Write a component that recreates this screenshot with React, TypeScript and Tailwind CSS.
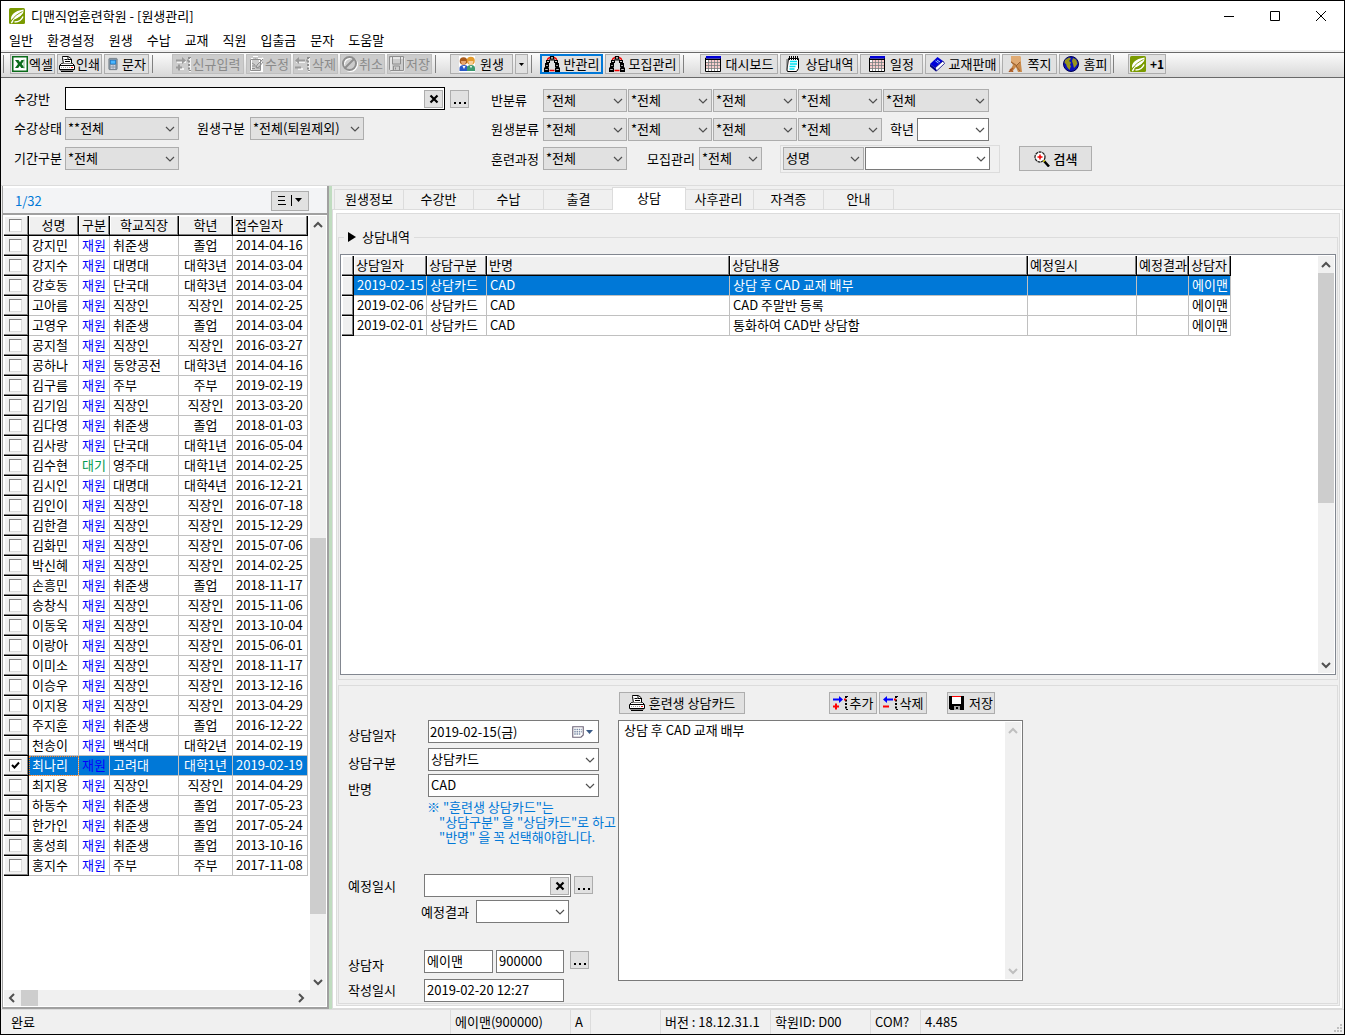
/**
 * 원생관리 — student management window
 *
 * Toolbar, search filters, student list and the consultation tab.
 */

import { useState } from 'react';
import type { ReactNode } from 'react';
import clsx from 'clsx';

type Student = [name: string, status: string, school: string, grade: string, date: string];

const STUDENTS: Student[] = [
  ['강지민', '재원', '취준생', '졸업', '2014-04-16'],
  ['강지수', '재원', '대명대', '대학3년', '2014-03-04'],
  ['강호동', '재원', '단국대', '대학3년', '2014-03-04'],
  ['고아름', '재원', '직장인', '직장인', '2014-02-25'],
  ['고영우', '재원', '취준생', '졸업', '2014-03-04'],
  ['공지철', '재원', '직장인', '직장인', '2016-03-27'],
  ['공하나', '재원', '동양공전', '대학3년', '2014-04-16'],
  ['김구름', '재원', '주부', '주부', '2019-02-19'],
  ['김기임', '재원', '직장인', '직장인', '2013-03-20'],
  ['김다영', '재원', '취준생', '졸업', '2018-01-03'],
  ['김사랑', '재원', '단국대', '대학1년', '2016-05-04'],
  ['김수현', '대기', '영주대', '대학1년', '2014-02-25'],
  ['김시인', '재원', '대명대', '대학4년', '2016-12-21'],
  ['김인이', '재원', '직장인', '직장인', '2016-07-18'],
  ['김한결', '재원', '직장인', '직장인', '2015-12-29'],
  ['김화민', '재원', '직장인', '직장인', '2015-07-06'],
  ['박신혜', '재원', '직장인', '직장인', '2014-02-25'],
  ['손흥민', '재원', '취준생', '졸업', '2018-11-17'],
  ['송창식', '재원', '직장인', '직장인', '2015-11-06'],
  ['이동욱', '재원', '직장인', '직장인', '2013-10-04'],
  ['이랑아', '재원', '직장인', '직장인', '2015-06-01'],
  ['이미소', '재원', '직장인', '직장인', '2018-11-17'],
  ['이승우', '재원', '직장인', '직장인', '2013-12-16'],
  ['이지용', '재원', '직장인', '직장인', '2013-04-29'],
  ['주지훈', '재원', '취준생', '졸업', '2016-12-22'],
  ['천송이', '재원', '백석대', '대학2년', '2014-02-19'],
  ['최나리', '재원', '고려대', '대학1년', '2019-02-19'],
  ['최지용', '재원', '직장인', '직장인', '2014-04-29'],
  ['하동수', '재원', '취준생', '졸업', '2017-05-23'],
  ['한가인', '재원', '취준생', '졸업', '2017-05-24'],
  ['홍성희', '재원', '취준생', '졸업', '2013-10-16'],
  ['홍지수', '재원', '주부', '주부', '2017-11-08'],
];

const CONSULTS = [
  ['2019-02-15', '상담카드', 'CAD', '상담 후 CAD 교재 배부', '', '', '에이맨'],
  ['2019-02-06', '상담카드', 'CAD', 'CAD 주말반 등록', '', '', '에이맨'],
  ['2019-02-01', '상담카드', 'CAD', '통화하여 CAD반 상담함', '', '', '에이맨'],
];

const MENUS = ['일반', '환경설정', '원생', '수납', '교재', '직원', '입출금', '문자', '도움말'];
const TABS = ['원생정보', '수강반', '수납', '출결', '상담', '사후관리', '자격증', '안내'];

/* ---------- icons ---------- */

function Svg({ children, className = 'w-4 h-4' }: { children: ReactNode; className?: string }) {
  return (
    <svg viewBox="0 0 16 16" className={clsx('shrink-0', className)} aria-hidden="true">
      {children}
    </svg>
  );
}

function LeafIcon({ className }: { className?: string }) {
  return (
    <Svg className={className}>
      <rect width="16" height="16" rx="1.5" fill="#7a9a01" />
      <path d="M2 12C1.500 7 5 3 14.500 1.500C15 6 12 8.500 5.500 11.500L3 15.500L1.800 15C2.500 13 4 11 6 9.500" fill="#fff" />
      <path d="M3 12C5 8.500 8.500 6 13.500 3.500M4.500 12.500C8 11.500 12 9 13.800 6" stroke="#7a9a01" strokeWidth="0.9" fill="none" />
      <path d="M5.500 14C10 13.800 13 11.500 14 8.500" stroke="#fff" strokeWidth="1.300" fill="none" />
    </Svg>
  );
}

function ExcelIcon() {
  return (
    <Svg>
      <rect x="0.750" y="0.750" width="14.500" height="14.500" fill="#fff" stroke="#0b6b1b" strokeWidth="1.500" />
      <path d="M3 4h3.500L8 6.300 9.500 4h3L9.700 8l3 4H9.200L7.800 9.800 6.200 12H3l3-4z" fill="#0b6b1b" />
      <path d="M12 3.500v9" stroke="#7fb98a" />
    </Svg>
  );
}

function PrinterIcon() {
  return (
    <Svg>
      <path d="M4.500 8.500L3.500 1.500V0.500h6l3 2.500v5.500z" fill="#fff" stroke="#000" />
      <path d="M5.500 3.500h3M6 5.500h5M9 1v2.500h3" stroke="#000" fill="none" />
      <path d="M0.500 9.500L2.500 7.500h11l2 2v4h-15z" fill="#fff" stroke="#000" />
      <path d="M3.500 8h9" stroke="#fff" />
      <path d="M1 9.500h14" stroke="#000" />
      <path d="M2 11.500h9" stroke="#999" strokeDasharray="1 1" />
      <path d="M12 11.500h2" stroke="#e00" />
      <path d="M1 13.500h14M2 15.500h12" stroke="#000" />
      <path d="M1 14.500h14" stroke="#888" />
    </Svg>
  );
}

function PhoneIcon() {
  return (
    <Svg className="w-3 h-4">
      <rect x="2.500" y="0.500" width="11" height="15" rx="1" fill="#8d9aa5" stroke="#66727c" />
      <rect x="4.500" y="3" width="7" height="5" fill="#49b6ff" stroke="#1d77c4" />
      <path d="M5 10h6M5 12h6M5 14h6" stroke="#eef" strokeDasharray="1.500 0.700" />
    </Svg>
  );
}

function InsertRowIcon({ off, minus }: { off?: boolean; minus?: boolean }) {
  const blue = off ? '#9a9a9a' : '#0000ff';
  const red = off ? '#9a9a9a' : '#ff0000';
  const dark = off ? '#8e8e8e' : '#000';
  return (
    <Svg>
      {off && <path d="M1 6h9M3 13h5M14 2v14" stroke="#fff" strokeWidth="1.500" />}
      {minus ? (
        <path d="M0 4.500L4 1v2.500h6v2H4V8z" fill={blue} />
      ) : (
        <path d="M10 4.500L6 1v2.500H0v2h6V8z" fill={blue} />
      )}
      <path d={minus ? 'M0 11.500h6' : 'M0 11.500h6M3 8.500v6'} stroke={red} strokeWidth="2" />
      <path d="M13 1v14" stroke={dark} strokeWidth="2" strokeDasharray="2 1.500" />
      <path d="M13 1.500h3M13 14.500h3" stroke={dark} strokeDasharray="2 1" />
      <path d="M11 4.500h2" stroke={red} strokeWidth="2" />
    </Svg>
  );
}

function EditIcon() {
  return (
    <Svg>
      <path d="M3 3h3V1h3v2h3v2l3-3M3 3v12h11V6" stroke="#fff" fill="none" strokeWidth="2" />
      <path d="M2.500 3.500h10v11h-10z M5 2h5M4 7l3 2M4 10h4M4 12.500h3M15 3L9 9l-1 3 3-1 4-5M9 12h3" stroke="#8e8e8e" fill="none" />
    </Svg>
  );
}

function CancelIcon() {
  return (
    <Svg>
      <circle cx="8.500" cy="8.500" r="6.500" stroke="#fff" strokeWidth="2" fill="none" />
      <circle cx="7.500" cy="7.500" r="6.500" stroke="#8e8e8e" strokeWidth="2" fill="none" />
      <path d="M12 3L3 12" stroke="#8e8e8e" strokeWidth="2" />
    </Svg>
  );
}

function FloppyIcon({ off }: { off?: boolean }) {
  if (off) {
    return (
      <Svg>
        <path d="M2 2h13v13H2z" stroke="#fff" fill="none" />
        <path d="M0.500 0.500h14v14h-13l-1-1zM3.500 1v7h8V1M4.500 14v-4h6v4M6.500 11.500v2" stroke="#8e8e8e" fill="none" />
      </Svg>
    );
  }
  return (
    <Svg>
      <path d="M0 1h15v14H1.500L0 13.500z" fill="#000" />
      <path d="M3 1h9v8H3z" fill="#fff" />
      <path d="M3 1.500h9" stroke="#f00" />
      <path d="M5 11h6v4H5z" fill="#a8a8a8" />
      <path d="M7 12h2v2H7z" fill="#000" />
    </Svg>
  );
}

function PeopleIcon() {
  return (
    <Svg>
      <path d="M0 0h16v16H0z" fill="#fff" />
      <path d="M0.500 15v-3c0-2 2-3 4.500-3s4 1 4 3v3z" fill="#2a58c8" />
      <circle cx="4.500" cy="5" r="3.800" fill="#a85a1c" />
      <path d="M2 5h5c0 5-5 5-5 0z" fill="#e8a870" />
      <path d="M8 15v-3c0-2 1.500-3 4-3s4 1 4 3v3z" fill="#3d9a6f" />
      <circle cx="11.800" cy="4.800" r="4" fill="#e39a2c" />
      <path d="M9.300 5h5c0 5.500-5 5.500-5 0z" fill="#f7cf9c" />
      <path d="M3.500 10l1.500 3 1.500-3M11 10l1 2.500 1-2.500" fill="#fff" />
    </Svg>
  );
}

function RingIcon() {
  return (
    <Svg>
      <path d="M3 5L4 2.500 6 1.500M10 1.500L12 2.500 13 5M2.500 8L2 11M13.500 8L14 11M5.500 14.500h5" stroke="#f00000" strokeWidth="1.400" fill="none" />
      <g fill="#fff" stroke="#000" strokeWidth="1.200">
        <path d="M6.500 0.600h3v2.400h-3zM2.600 4.500h2.800v2H2.600zM10.600 4.500h2.800v2h-2.800zM1.600 8.600h2.800v2H1.600zM11.600 8.600h2.800v2h-2.800zM0.600 12.600h3.800v2H0.600zM11.600 12.600h3.800v2h-3.800z" />
      </g>
      <path d="M5 4h6M1 7.500h4M11 7.500h4M0.500 11.500h4M11.500 11.500h4M0 15.500h5M11 15.500h5" stroke="#000" />
    </Svg>
  );
}

function CalendarIcon() {
  return (
    <Svg>
      <path d="M0.500 2h15v13.500h-15z" fill="#fff" stroke="#000" />
      <path d="M1 0h15v2.500H1z" fill="#0000d8" />
      <path d="M3.500 3v12M6.500 3v12M9.500 3v12M12.500 3v12M1 6.500h14M1 9.500h14M1 12.500h14" stroke="#777" strokeWidth="0.800" />
      <path d="M4.500 5h10M1.500 8h13M1.500 11h13" stroke="#e03030" strokeDasharray="1 2" />
      <path d="M0 3.500h16" stroke="#000" />
    </Svg>
  );
}

function NotepadIcon() {
  return (
    <Svg>
      <path d="M3.500 2.500h10v10l-2 3h-9l-0.500-2z" fill="#fff" stroke="#000" />
      <path d="M5 5.500h7M5 8h7M4.500 10.500h6M4.500 13h5" stroke="#00e0f0" strokeWidth="1.500" />
      <path d="M4.500 0v4M6.500 0v4M8.500 0v4M10.500 0v4M12.500 0v4" stroke="#000" />
      <path d="M2 3v12" stroke="#666" />
    </Svg>
  );
}

function BookIcon() {
  return (
    <Svg>
      <path d="M1 8L8.500 1 14 5 6 12z" fill="#0000d8" />
      <path d="M6 12l8-7 1.500 2.500L7.500 15z" fill="#fff" stroke="#000080" strokeWidth="0.800" />
      <path d="M1 8v2.500L7 15.500l0.500-1.500L6 12z" fill="#000080" />
      <path d="M6.500 5l3 2M8 4l3 2" stroke="#9fd0ff" />
    </Svg>
  );
}

function NoteIcon() {
  return (
    <Svg>
      <path d="M3 0h8l2 1v7l1 8h-4L8 11l-4 5H1l4-7-2-3z" fill="#c98a4b" />
      <path d="M3 0h8l2 1v4L9 9 3 5z" fill="#e0ab74" />
      <path d="M3 6l6 4M12 6l-4 4 4 5" stroke="#9a6233" fill="none" />
      <path d="M2 13l3 3M1 16l4-4" stroke="#a85a28" strokeWidth="1.500" />
    </Svg>
  );
}

function GlobeIcon() {
  return (
    <Svg>
      <circle cx="8" cy="8" r="7.500" fill="#0a12b8" stroke="#000050" />
      <path d="M2 4l4-2.500 2 1L6 5l2 1.500-1 2.500 1 1-1.500 4L4 11 3 8 1.500 7zM10 2l3 1.500 1.500 4L13 10l-2 2-1-4-1-3z" fill="#98951a" />
    </Svg>
  );
}

function SearchIcon() {
  return (
    <Svg>
      <circle cx="6" cy="6" r="5" fill="#fff" stroke="#222" strokeWidth="1.300" strokeDasharray="3 0.600" />
      <path d="M3.500 6h5M6 3.500v5" stroke="#f00000" strokeWidth="1.500" />
      <path d="M10 10l5 5.500" stroke="#000" strokeWidth="2.500" />
      <path d="M9.500 9.500l1 1" stroke="#e8d800" strokeWidth="2" />
    </Svg>
  );
}

function DatePickIcon() {
  return (
    <Svg className="w-3 h-3">
      <path d="M1 1h14v11l-3 3H1z" fill="#fff" stroke="#6d6478" strokeWidth="1.500" />
      <path d="M3 4.500h10M3 7.500h10M3 10.500h8" stroke="#7f8fa9" strokeWidth="2" strokeDasharray="2 1" />
    </Svg>
  );
}

function Chevron({ dir = 'down', className = 'text-[#505050]', bold }: { dir?: 'up' | 'down' | 'left' | 'right'; className?: string; bold?: boolean }) {
  const d = {
    up: 'M1 7L5 3L9 7',
    down: 'M1 3L5 7L9 3',
    left: 'M7 1L3 5L7 9',
    right: 'M3 1L7 5L3 9',
  }[dir];
  return (
    <svg viewBox="0 0 10 10" className={clsx('w-[10px] h-[10px] shrink-0', className)} aria-hidden="true">
      <path d={d} fill="none" stroke="currentColor" strokeWidth={bold ? 2 : 1.2} />
    </svg>
  );
}

function CloseGlyph() {
  return (
    <svg viewBox="0 0 10 10" className="w-[10px] h-[10px]" aria-hidden="true">
      <path d="M1.500 1.500l7 7M8.500 1.500l-7 7" stroke="#000" strokeWidth="2.200" />
    </svg>
  );
}

function Dots() {
  return (
    <svg viewBox="0 0 14 10" className="w-[14px] h-[10px]" aria-hidden="true">
      <path d="M1 8h2v2H1zM6 8h2v2H6zM11 8h2v2h-2z" fill="#000" />
    </svg>
  );
}

/* ---------- controls ---------- */

function ToolButton({ icon, label, className, off }: { icon?: ReactNode; label?: string; className: string; off?: boolean }) {
  return (
    <button
      type="button"
      disabled={off}
      className={clsx(
        'h-5 shrink-0 flex items-center justify-center whitespace-nowrap',
        off ? 'bg-[#cccccc] border border-[#bfbfbf] text-[#8a8a8a]' : 'bg-[#e1e1e1]',
        className,
      )}
    >
      {icon}
      {label && <span>{label}</span>}
    </button>
  );
}

function Separator({ className }: { className?: string }) {
  return <span className={clsx('w-px h-[18px] bg-[#808080] shrink-0', className)} />;
}

function Select({ label, value, className, white }: { label: string; value: string; className: string; white?: boolean }) {
  return (
    <span className={clsx('relative h-[23px] shrink-0', className)}>
      <select
        aria-label={label}
        defaultValue={value}
        className={clsx(
          'appearance-none w-full h-full pl-[2px] pr-4 pb-[2px] border rounded-none outline-none leading-4',
          white ? 'bg-white border-[#7a7a7a]' : 'bg-[#e1e1e1] border-[#adadad]',
        )}
      >
        <option value={value}>{value}</option>
      </select>
      <Chevron className="absolute right-1 top-[7px] text-[#505050] pointer-events-none" />
    </span>
  );
}

function MiniButton({ label, children }: { label: string; children: ReactNode }) {
  return (
    <button
      type="button"
      aria-label={label}
      className="w-[19px] h-[18px] shrink-0 flex items-center justify-center bg-[#e1e1e1] border border-[#adadad]"
    >
      {children}
    </button>
  );
}

function ClearInput({ id, className }: { id: string; className: string }) {
  return (
    <span className={clsx('h-[23px] flex items-center bg-white border pr-px', className)}>
      <input id={id} type="text" className="flex-1 min-w-0 h-full px-1 outline-none" />
      <MiniButton label="지우기">
        <CloseGlyph />
      </MiniButton>
    </span>
  );
}

// before / thumb / after are relative track lengths
function ScrollBar({ before, thumb, after, faded }: { before: number; thumb: number; after: number; faded?: boolean }) {
  const color = faded ? 'text-[#bfbfbf]' : 'text-[#505050]';
  return (
    <div className="w-4 shrink-0 bg-[#f0f0f0] flex flex-col items-center">
      <span className="h-[17px] flex items-center">
        <Chevron dir="up" bold className={color} />
      </span>
      <span style={{ flexGrow: before }} />
      <span className="w-full bg-[#cdcdcd]" style={{ flexGrow: thumb }} />
      <span style={{ flexGrow: after }} />
      <span className="h-[17px] flex items-center">
        <Chevron dir="down" bold className={color} />
      </span>
    </div>
  );
}

const HEAD_CELL =
  'h-5 p-0 pb-[2px] font-normal whitespace-nowrap overflow-hidden bg-[#f0f0f0] border-r border-b border-black shadow-[inset_-1px_-1px_0_#808080,inset_1px_1px_0_#ffffff]';
const MARK_CELL =
  'h-5 p-0 bg-[#f0f0f0] border-r border-b border-black shadow-[inset_-1px_-1px_0_#808080,inset_1px_1px_0_#ffffff]';
const BODY_CELL = 'h-5 p-0 pb-[2px] whitespace-nowrap overflow-hidden border-r border-b border-[#c0c0c0]';

function RowCheck({ label, checked, onChange }: { label: string; checked: boolean; onChange: () => void }) {
  return (
    <span className="relative block w-[13px] h-[13px] ml-[5px] mb-px">
      <input
        type="checkbox"
        aria-label={label}
        checked={checked}
        onChange={onChange}
        className="appearance-none block w-[13px] h-[13px] bg-white border border-t-[#808080] border-l-[#808080] border-r-[#dcdcdc] border-b-[#dcdcdc]"
      />
      {checked && (
        <svg viewBox="0 0 9 9" className="absolute left-[2px] top-[2px] w-[9px] h-[9px] pointer-events-none" aria-hidden="true">
          <path d="M1 4l2.500 2.500L8 1.500" fill="none" stroke="#000" strokeWidth="2" />
        </svg>
      )}
    </span>
  );
}

/* ---------- sections ---------- */

function TitleBar() {
  return (
    <header className="bg-white">
      <div className="h-[29px] flex items-center pl-2">
        <LeafIcon className="w-4 h-4" />
        <h1 className="ml-[6px] flex-1">디맨직업훈련학원 - [원생관리]</h1>
        <button type="button" aria-label="최소화" className="w-[46px] h-full flex items-center justify-center">
          <svg viewBox="0 0 10 10" className="w-[10px] h-[10px]"><path d="M0 5.500h10" stroke="#000" /></svg>
        </button>
        <button type="button" aria-label="최대화" className="w-[46px] h-full flex items-center justify-center">
          <svg viewBox="0 0 10 10" className="w-[10px] h-[10px]"><path d="M0.500 0.500h9v9h-9z" fill="none" stroke="#000" /></svg>
        </button>
        <button type="button" aria-label="닫기" className="w-[46px] h-full flex items-center justify-center">
          <svg viewBox="0 0 10 10" className="w-[10px] h-[10px]"><path d="M0 0l10 10M10 0L0 10" stroke="#000" /></svg>
        </button>
      </div>
      <nav className="h-5 flex items-center gap-[14px] pl-2">
        {MENUS.map((m) => (
          <button key={m} type="button">{m}</button>
        ))}
      </nav>
    </header>
  );
}

function Toolbar() {
  return (
    <div className="mt-[2px] h-[26px] shrink-0 flex items-center pl-[2px] pb-[2px] border-y border-[#696969] bg-linear-to-b from-[#fbfbfb] to-[#d8d8d8]">
      <Separator />
      <div className="flex gap-[2px] ml-[6px]">
        <ToolButton icon={<ExcelIcon />} label="엑셀" className="w-[45px] gap-px border border-[#adadad]" />
        <ToolButton icon={<PrinterIcon />} label="인쇄" className="w-[45px] gap-px border border-[#adadad]" />
        <ToolButton icon={<PhoneIcon />} label="문자" className="w-[45px] gap-[3px] border border-[#adadad]" />
      </div>
      <Separator className="ml-[3px]" />
      <div className="flex gap-[2px] ml-[19px]">
        <ToolButton off icon={<InsertRowIcon off />} label="신규입력" className="w-[72px] gap-px" />
        <ToolButton off icon={<EditIcon />} label="수정" className="w-[45px] gap-px" />
        <ToolButton off icon={<InsertRowIcon off minus />} label="삭제" className="w-[45px] gap-px" />
        <ToolButton off icon={<CancelIcon />} label="취소" className="w-[45px] gap-px" />
        <ToolButton off icon={<FloppyIcon off />} label="저장" className="w-[45px] gap-px" />
      </div>
      <Separator className="ml-[3px]" />
      <div className="flex gap-[2px] ml-[14px]">
        <ToolButton icon={<PeopleIcon />} label="원생" className="w-[63px] gap-[5px] border border-[#adadad]" />
        <ToolButton
          icon={<svg viewBox="0 0 5 3" className="w-[5px] h-[3px]"><path d="M0 0h5L2.500 3z" /></svg>}
          className="w-[13px] border border-[#adadad]"
        />
      </div>
      <Separator className="ml-[3px]" />
      <div className="flex gap-[2px] ml-2">
        <ToolButton icon={<RingIcon />} label="반관리" className="w-[63px] gap-1 border-2 border-[#0078d7]" />
        <ToolButton icon={<RingIcon />} label="모집관리" className="w-[75px] gap-1 border border-[#adadad]" />
      </div>
      <Separator className="ml-[3px]" />
      <div className="flex gap-[2px] ml-4">
        <ToolButton icon={<CalendarIcon />} label="대시보드" className="w-[78px] gap-[5px] border border-[#adadad]" />
        <ToolButton icon={<NotepadIcon />} label="상담내역" className="w-[78px] gap-[5px] border border-[#adadad]" />
        <ToolButton icon={<CalendarIcon />} label="일정" className="w-[63px] gap-[5px] border border-[#adadad]" />
        <ToolButton icon={<BookIcon />} label="교재판매" className="w-[75px] gap-1 border border-[#adadad]" />
        <ToolButton icon={<NoteIcon />} label="쪽지" className="w-[55px] gap-1 border border-[#adadad]" />
        <ToolButton icon={<GlobeIcon />} label="홈피" className="w-[52px] gap-[5px] border border-[#adadad]" />
      </div>
      <Separator className="ml-[2px]" />
      <ToolButton icon={<LeafIcon className="w-4 h-4" />} label="+1" className="w-[38px] ml-[14px] gap-1 text-xs font-bold border border-[#adadad]" />
    </div>
  );
}

function Filters() {
  return (
    <form className="h-[108px] shrink-0 flex border-b border-[#dcdcdc] pt-[9px]" onSubmit={(e) => e.preventDefault()}>
      <div className="w-[490px] shrink-0 pl-[13px] flex flex-col gap-[7px]">
        <div className="flex items-center">
          <label htmlFor="class" className="w-[51px]">수강반</label>
          <ClearInput id="class" className="w-[380px] border-black" />
          <span className="ml-[5px] flex">
            <MiniButton label="수강반 찾기"><Dots /></MiniButton>
          </span>
        </div>
        <div className="flex items-center">
          <span className="w-[51px] pb-[2px]">수강상태</span>
          <Select label="수강상태" value="**전체" className="w-[114px]" />
          <span className="ml-[18px] w-[53px] pb-[2px]">원생구분</span>
          <Select label="원생구분" value="*전체(퇴원제외)" className="w-[114px]" />
        </div>
        <div className="flex items-center">
          <span className="w-[51px] pb-[2px]">기간구분</span>
          <Select label="기간구분" value="*전체" className="w-[114px]" />
        </div>
      </div>
      <div className="flex flex-col gap-[6px] pt-[2px]">
        <div className="flex items-center">
          <span className="w-[52px] pb-[2px]">반분류</span>
          <div className="flex gap-px">
            <Select label="반분류 1" value="*전체" className="w-[84px]" />
            <Select label="반분류 2" value="*전체" className="w-[84px]" />
            <Select label="반분류 3" value="*전체" className="w-[84px]" />
            <Select label="반분류 4" value="*전체" className="w-[84px]" />
            <Select label="반분류 5" value="*전체" className="w-[106px]" />
          </div>
        </div>
        <div className="flex items-center">
          <span className="w-[52px] pb-[2px]">원생분류</span>
          <div className="flex gap-px">
            <Select label="원생분류 1" value="*전체" className="w-[84px]" />
            <Select label="원생분류 2" value="*전체" className="w-[84px]" />
            <Select label="원생분류 3" value="*전체" className="w-[84px]" />
            <Select label="원생분류 4" value="*전체" className="w-[84px]" />
          </div>
          <span className="ml-2 w-[27px] pb-[2px]">학년</span>
          <Select label="학년" value="" white className="w-[72px]" />
        </div>
        <div className="h-[23px] flex items-center">
          <span className="w-[52px]">훈련과정</span>
          <Select label="훈련과정" value="*전체" className="w-[84px]" />
          <span className="ml-5 w-[52px]">모집관리</span>
          <Select label="모집관리" value="*전체" className="w-[63px]" />
          <div className="ml-[18px] h-7 w-[220px] shrink-0 flex items-center gap-px pl-[2px] border border-[#dcdcdc]">
            <Select label="검색 항목" value="성명" className="w-[81px]" />
            <Select label="검색어" value="" white className="w-[125px]" />
          </div>
          <button
            type="submit"
            className="ml-[19px] w-[73px] h-[25px] shrink-0 flex items-center justify-center gap-1 bg-[#e1e1e1] border border-[#adadad] font-medium"
          >
            <SearchIcon />
            검색
          </button>
        </div>
      </div>
    </form>
  );
}

function StudentList() {
  const [checked, setChecked] = useState<Record<string, boolean>>({ 최나리: true });
  const selected = '최나리';
  const toggle = (name: string) => setChecked((c) => ({ ...c, [name]: !c[name] }));

  return (
    <aside className="w-[327px] shrink-0 flex flex-col bg-white ml-px border-l border-r-2 border-b-2 border-[#a0a0a0]">
      <div className="mt-[2px] h-[27px] shrink-0 flex items-center justify-between bg-[#f3f4f6] border-b-2 border-[#a0a0a0] pl-3 pr-[18px]">
        <span className="text-[#0078d7]">1/32</span>
        <button type="button" aria-label="목록 메뉴" className="w-[38px] h-5 flex items-center justify-center bg-[#e1e1e1] border border-[#adadad]">
          <svg viewBox="0 0 26 11" className="w-[26px] h-[11px]">
            <path d="M1 1.500h7M1 5.500h7M1 9.500h8M14.500 0v11" stroke="#000" />
            <path d="M18 3h7l-3.500 4z" />
          </svg>
        </button>
      </div>
      <div className="flex-1 flex pt-px pl-px pr-px">
        <div className="flex-1 min-w-0">
          <table className="table-fixed border-separate border-spacing-0 w-[304px]">
            <colgroup>
              <col className="w-[25px]" />
              <col className="w-[50px]" />
              <col className="w-[31px]" />
              <col className="w-[69px]" />
              <col className="w-[54px]" />
              <col className="w-[75px]" />
            </colgroup>
            <thead>
              <tr>
                <th className={MARK_CELL}>
                  <RowCheck label="전체 선택" checked={!!checked.all} onChange={() => toggle('all')} />
                </th>
                <th className={HEAD_CELL}>성명</th>
                <th className={HEAD_CELL}>구분</th>
                <th className={HEAD_CELL}>학교직장</th>
                <th className={HEAD_CELL}>학년</th>
                <th className={clsx(HEAD_CELL, 'text-left pl-[2px]')}>접수일자</th>
              </tr>
            </thead>
            <tbody>
              {STUDENTS.map(([name, status, school, grade, date]) => (
                <tr key={name} className={clsx(name === selected && 'bg-[#0078d7] text-white')}>
                  <td className={MARK_CELL}>
                    <RowCheck label={name} checked={!!checked[name]} onChange={() => toggle(name)} />
                  </td>
                  <td className={clsx(BODY_CELL, 'pl-[3px]', name === selected && 'outline-1 outline-dotted -outline-offset-1 outline-[#ff8728]')}>
                    {name}
                  </td>
                  <td className={clsx(BODY_CELL, 'text-center', status === '대기' ? 'text-[#009a4e]' : 'text-[#0000ff]')}>{status}</td>
                  <td className={clsx(BODY_CELL, 'pl-[3px]')}>{school}</td>
                  <td className={clsx(BODY_CELL, 'text-center')}>{grade}</td>
                  <td className={clsx(BODY_CELL, 'pl-[3px]')}>{date}</td>
                </tr>
              ))}
            </tbody>
          </table>
        </div>
        <ScrollBar before={305} thumb={376} after={59} />
      </div>
      <div className="h-4 shrink-0 mb-px mx-px bg-[#f0f0f0] flex items-center pl-[3px] pr-5">
        <Chevron dir="left" bold />
        <span className="ml-1 w-[17px] h-full bg-[#cdcdcd]" />
        <span className="flex-1" />
        <Chevron dir="right" bold />
      </div>
    </aside>
  );
}

function ConsultGrid() {
  const heads = ['상담일자', '상담구분', '반명', '상담내용', '예정일시', '예정결과', '상담자'];
  return (
    <div className="flex-1 flex bg-white border border-[#828790] p-px">
      <div className="flex-1 min-w-0">
        <table className="table-fixed border-separate border-spacing-0 w-[889px]">
          <colgroup>
            <col className="w-[12px]" />
            <col className="w-[73px]" />
            <col className="w-[60px]" />
            <col className="w-[243px]" />
            <col className="w-[298px]" />
            <col className="w-[109px]" />
            <col className="w-[52px]" />
            <col className="w-[42px]" />
          </colgroup>
          <thead>
            <tr>
              <th className={HEAD_CELL} />
              {heads.map((h) => (
                <th key={h} className={clsx(HEAD_CELL, 'text-left pl-[2px]')}>{h}</th>
              ))}
            </tr>
          </thead>
          <tbody>
            {CONSULTS.map((row, i) => (
              <tr key={row[0]} className={clsx(i === 0 && 'bg-[#0078d7] text-white')}>
                <td className={MARK_CELL} />
                {row.map((cell, j) => (
                  <td key={j} className={clsx(BODY_CELL, 'pl-[3px]')}>{cell}</td>
                ))}
              </tr>
            ))}
          </tbody>
        </table>
      </div>
      <ScrollBar before={0} thumb={229} after={153} />
    </div>
  );
}

const TEXT_BOX = 'h-[23px] px-[2px] pb-[2px] bg-white border border-[#7a7a7a] outline-none';

function ConsultForm() {
  return (
    <div className="flex border border-[#dcdcdc] pt-[6px] pl-[9px] mt-[5px]">
      <div className="w-[270px] shrink-0 pt-7 pb-px">
        <div className="flex items-end mb-[5px]">
          <label htmlFor="c-date" className="w-20">상담일자</label>
          <span className="w-[171px] h-[23px] flex items-center gap-[2px] bg-white border border-[#7a7a7a] pr-[5px]">
            <input id="c-date" defaultValue="2019-02-15(금)" className="flex-1 min-w-0 h-full pl-px outline-none" />
            <DatePickIcon />
            <svg viewBox="0 0 7 4" className="w-[7px] h-1" aria-hidden="true"><path d="M0 0h7L3.500 4z" fill="#3a5a86" /></svg>
          </span>
        </div>
        <div className="flex items-end mb-[3px]">
          <span className="w-20">상담구분</span>
          <Select label="상담구분" value="상담카드" white className="w-[171px]" />
        </div>
        <div className="flex items-end">
          <span className="w-20">반명</span>
          <Select label="반명" value="CAD" white className="w-[171px]" />
        </div>
        <div className="mt-[2px] ml-[79px] leading-[15px] whitespace-nowrap text-[#0078d7]">
          <p>※ "훈련생 상담카드"는</p>
          <p className="pl-3">"상담구분" 을 "상담카드"로 하고</p>
          <p className="pl-3">"반명" 을 꼭 선택해야합니다.</p>
        </div>
        <div className="flex items-center mt-[30px]">
          <label htmlFor="c-plan" className="w-[76px]">예정일시</label>
          <ClearInput id="c-plan" className="w-[147px] border-[#7a7a7a]" />
          <span className="ml-[3px] mb-[2px] flex">
            <MiniButton label="예정일시 선택"><Dots /></MiniButton>
          </span>
        </div>
        <div className="flex items-center mt-[3px] ml-[73px]">
          <span className="w-[55px]">예정결과</span>
          <Select label="예정결과" value="" white className="w-[93px]" />
        </div>
        <div className="flex items-end mt-[27px]">
          <label htmlFor="c-by" className="w-[76px]">상담자</label>
          <input id="c-by" defaultValue="에이맨" className={clsx(TEXT_BOX, 'w-[69px]')} />
          <input aria-label="상담자 번호" defaultValue="900000" className={clsx(TEXT_BOX, 'w-[68px] ml-[3px]')} />
          <span className="ml-[6px] mb-1 flex">
            <MiniButton label="상담자 찾기"><Dots /></MiniButton>
          </span>
        </div>
        <div className="flex items-center mt-[6px]">
          <label htmlFor="c-written" className="w-[76px] pb-[2px]">작성일시</label>
          <input id="c-written" defaultValue="2019-02-20 12:27" className={clsx(TEXT_BOX, 'w-[140px]')} />
        </div>
      </div>
      <div className="w-[405px] mb-[22px] flex flex-col">
        <div className="flex h-[22px] pl-px mb-[6px]">
          <button type="button" className="w-[126px] flex items-center justify-center gap-1 bg-[#e1e1e1] border border-[#adadad]">
            <PrinterIcon />
            훈련생 상담카드
          </button>
          <button type="button" className="ml-[84px] w-12 flex items-center justify-center gap-px bg-[#e1e1e1] border border-[#adadad]">
            <InsertRowIcon />
            추가
          </button>
          <button type="button" className="ml-[2px] w-12 flex items-center justify-center gap-px bg-[#e1e1e1] border border-[#adadad]">
            <InsertRowIcon minus />
            삭제
          </button>
          <button type="button" className="ml-5 w-12 flex items-center justify-center gap-1 bg-[#e1e1e1] border border-[#adadad]">
            <FloppyIcon />
            저장
          </button>
        </div>
        <div className="flex-1 flex bg-white border border-[#7a7a7a] p-px">
          <textarea
            aria-label="상담내용"
            defaultValue="상담 후 CAD 교재 배부"
            className="flex-1 resize-none overflow-hidden outline-none px-1"
          />
          <ScrollBar before={1} thumb={0} after={0} faded />
        </div>
      </div>
    </div>
  );
}

function DetailPane() {
  const [tab, setTab] = useState('상담');
  return (
    <main className="flex-1 min-w-0 flex flex-col pr-px pt-px">
      <div role="tablist" className="h-[22px] shrink-0 flex items-end pl-[2px]">
        {TABS.map((t) => (
          <button
            key={t}
            type="button"
            role="tab"
            aria-selected={t === tab}
            onClick={() => setTab(t)}
            className={clsx(
              'shrink-0 border-t border-r border-[#dcdcdc]',
              t === tab
                ? 'w-[74px] h-[23px] pb-[3px] -mx-[2px] -mb-px bg-white border-l relative'
                : 'w-[70px] h-5 pb-[2px] bg-[#f0f0f0] first:border-l',
            )}
          >
            {t}
          </button>
        ))}
      </div>
      <div className="flex-1 flex bg-white border border-[#dcdcdc] pt-[3px] pl-[3px] pr-[2px] pb-[2px]">
        <div className="flex-1 min-w-0 flex flex-col bg-[#f0f0f0] border border-[#dcdcdc] pt-[15px] px-px pb-px">
          <fieldset className="flex-1 min-w-0 flex flex-col border border-[#dcdcdc] pt-[9px] px-px pb-1">
            <legend className="ml-1 px-1 h-4 flex items-center gap-[6px]">
              <svg viewBox="0 0 8 10" className="w-2 h-[10px]" aria-hidden="true"><path d="M0 0l8 5-8 5z" /></svg>
              상담내역
            </legend>
            <ConsultGrid />
          </fieldset>
          <ConsultForm />
        </div>
      </div>
    </main>
  );
}

function StatusBar() {
  const cell = 'h-full flex items-center pl-1 border-l border-[#dcdcdc]';
  return (
    <footer className="h-[25px] shrink-0 flex items-center border-t border-[#dcdcdc]">
      <span className="w-[449px] pl-[10px]">완료</span>
      <span className={clsx(cell, 'w-[120px]')}>에이맨(900000)</span>
      <span className={clsx(cell, 'w-5')}>A</span>
      <span className={clsx(cell, 'w-[70px]')} />
      <span className={clsx(cell, 'w-[110px]')}>버전 : 18.12.31.1</span>
      <span className={clsx(cell, 'w-[100px]')}>학원ID: D00</span>
      <span className={clsx(cell, 'w-[50px]')}>COM?</span>
      <span className={clsx(cell, 'flex-1')}>4.485</span>
      <svg viewBox="0 0 12 12" className="w-3 h-3 self-end" aria-hidden="true">
        <path d="M8 2h2v2H8zM8 5h2v2H8zM8 8h2v2H8zM5 5h2v2H5zM5 8h2v2H5zM2 8h2v2H2z" fill="#bfbfbf" />
      </svg>
    </footer>
  );
}

export default function App() {
  return (
    <div className="min-h-screen min-w-[1200px] flex flex-col border border-black bg-[#f0f0f0] text-[13px] leading-4 text-black font-['Noto_Sans_CJK_KR',sans-serif]">
      <TitleBar />
      <Toolbar />
      <Filters />
      <div className="flex-1 flex">
        <StudentList />
        <div className="w-[3px] shrink-0 bg-[#c0dcc0]" />
        <DetailPane />
      </div>
      <StatusBar />
    </div>
  );
}
